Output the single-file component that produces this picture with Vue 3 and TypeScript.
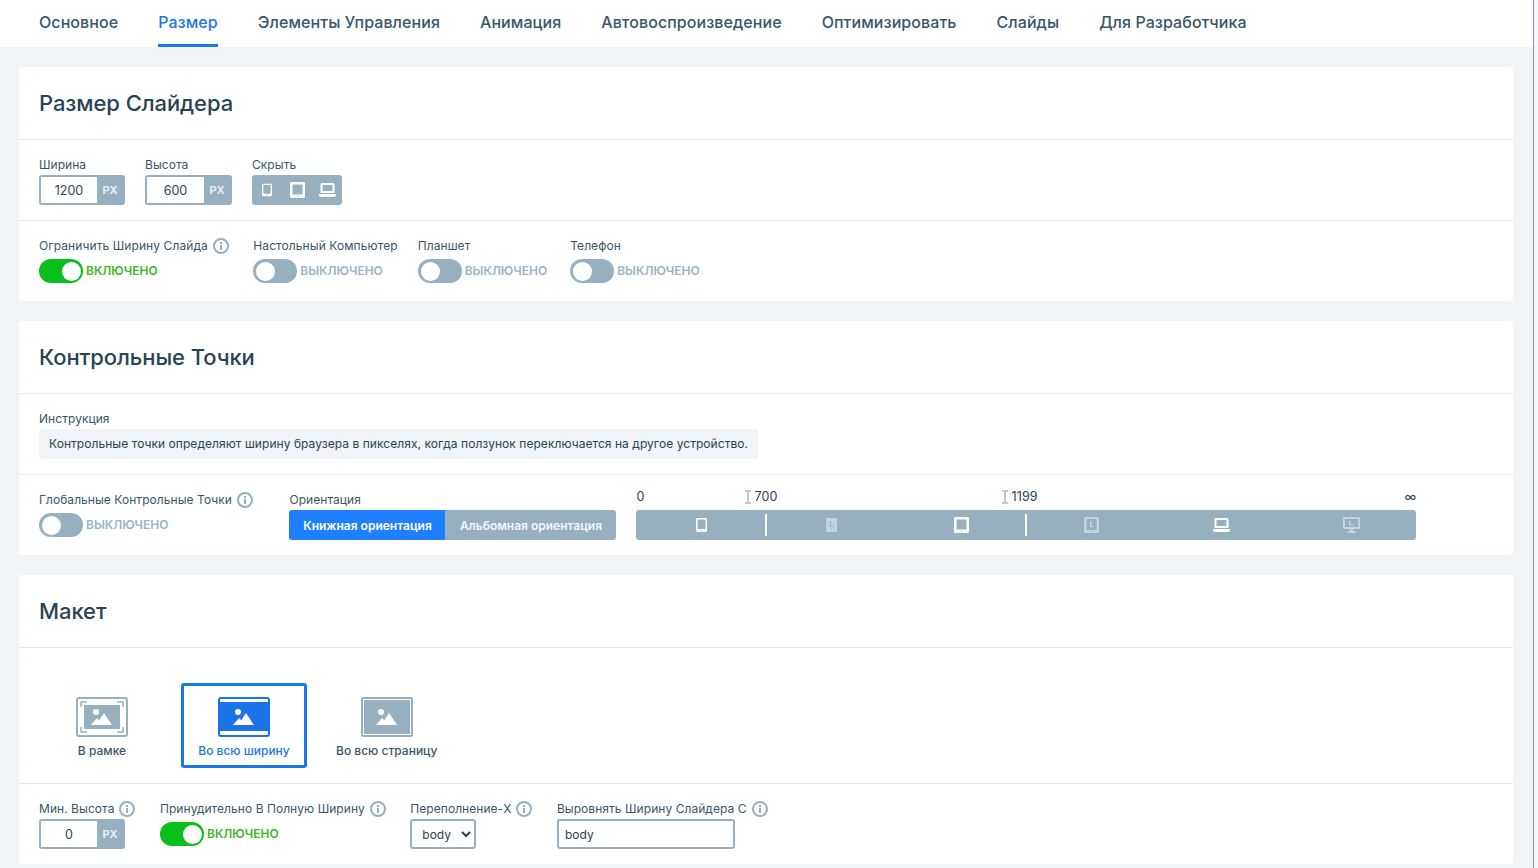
<script setup lang="ts">
import { ref } from 'vue'

const tabs = ['Основное', 'Размер', 'Элементы Управления', 'Анимация', 'Автовоспроизведение', 'Оптимизировать', 'Слайды', 'Для Разработчика']
const activeTab = ref('Размер')

const sizeToggles = [
  { label: 'Ограничить Ширину Слайда', on: true, info: true },
  { label: 'Настольный Компьютер', on: false, info: false },
  { label: 'Планшет', on: false, info: false },
  { label: 'Телефон', on: false, info: false },
]

// ширина и высота иконки совпадают с viewBox символа
const breakpoints = [
  { id: 'phone', w: 11, h: 14, dim: false },
  { id: 'phone-l', w: 11, h: 14, dim: true },
  { id: 'tablet', w: 15, h: 16, dim: false },
  { id: 'tablet-l', w: 15, h: 16, dim: true },
  { id: 'laptop', w: 17, h: 14, dim: false },
  { id: 'desktop-l', w: 17, h: 16, dim: true },
]

const layouts = [
  { id: 'boxed', label: 'В рамке' },
  { id: 'wide', label: 'Во всю ширину' },
  { id: 'page', label: 'Во всю страницу' },
]
const activeLayout = ref('wide')
</script>

<template>
  <div class="page">
    <svg class="defs" aria-hidden="true">
      <symbol id="phone" viewBox="0 0 11 14">
        <path fill-rule="evenodd" d="M1.500 0h8A1.500 1.500 0 0 1 11 1.500v11A1.500 1.500 0 0 1 9.500 14h-8A1.500 1.500 0 0 1 0 12.500v-11A1.500 1.500 0 0 1 1.500 0zM1.500 1.500v9.500h8V1.500zM5 12v1h1v-1z" />
      </symbol>
      <symbol id="phone-l" viewBox="0 0 11 14">
        <path fill-rule="evenodd" d="M1 0h9a1 1 0 0 1 1 1v12a1 1 0 0 1-1 1H1a1 1 0 0 1-1-1V1a1 1 0 0 1 1-1zM4 3v6h4V8H5V3zM5 11v1h1v-1z" />
      </symbol>
      <symbol id="tablet" viewBox="0 0 15 16">
        <path fill-rule="evenodd" d="M1.500 0h12A1.500 1.500 0 0 1 15 1.500v13a1.500 1.500 0 0 1-1.500 1.500h-12A1.500 1.500 0 0 1 0 14.500v-13A1.500 1.500 0 0 1 1.500 0zM2.500 2.500v10h10v-10zM7 13.500v1h1v-1z" />
      </symbol>
      <symbol id="tablet-l" viewBox="0 0 15 16">
        <path fill-rule="evenodd" d="M1.500 0h12A1.500 1.500 0 0 1 15 1.500v13a1.500 1.500 0 0 1-1.500 1.500h-12A1.500 1.500 0 0 1 0 14.500v-13A1.500 1.500 0 0 1 1.500 0zM2.500 2v11h10V2zM6 4v6h4V9H7.500V4zM7 14v1h1v-1z" />
      </symbol>
      <symbol id="laptop" viewBox="0 0 17 14">
        <path fill-rule="evenodd" d="M3 0h11a1.500 1.500 0 0 1 1.500 1.500V10H1.500V1.500A1.500 1.500 0 0 1 3 0zM3.500 2v6h10V2zM0 11h17v1a2 2 0 0 1-2 2H2a2 2 0 0 1-2-2z" />
      </symbol>
      <symbol id="desktop-l" viewBox="0 0 17 16">
        <path fill-rule="evenodd" d="M1 0h15a1 1 0 0 1 1 1v10a1 1 0 0 1-1 1H1a1 1 0 0 1-1-1V1a1 1 0 0 1 1-1zM2 2v8h13V2zM6 3.500v5h4.500V7.500H7.500v-4zM7 12h3v2h2.500v2h-8v-2H7z" />
      </symbol>
      <symbol id="info" viewBox="0 0 16 16">
        <circle cx="8" cy="8" r="7" fill="none" stroke="currentColor" stroke-width="2" />
        <rect x="7" y="7" width="2" height="5" fill="currentColor" />
        <rect x="7" y="4" width="2" height="2" fill="currentColor" />
      </symbol>
      <symbol id="peaks" viewBox="0 0 52 40">
        <circle cx="20" cy="15" r="3" />
        <path d="M15 28l6-7 2.300 2.300L28 16l8 12z" />
      </symbol>
    </svg>

    <nav class="tabs">
      <a v-for="tab in tabs" :key="tab" class="tab" :class="{ active: tab === activeTab }" @click="activeTab = tab">{{ tab }}</a>
    </nav>

    <main class="content">
      <section class="card">
        <h2 class="card-title">Размер Слайдера</h2>
        <div class="row">
          <div class="field">
            <label class="lbl">Ширина</label>
            <div class="num w86"><input class="num-input" value="1200" /><span class="unit">PX</span></div>
          </div>
          <div class="field">
            <label class="lbl">Высота</label>
            <div class="num w87"><input class="num-input" value="600" /><span class="unit">PX</span></div>
          </div>
          <div class="field">
            <label class="lbl">Скрыть</label>
            <div class="hide-group">
              <svg class="ic first" width="10" height="14"><use href="#phone" /></svg>
              <svg class="ic" width="15" height="16"><use href="#tablet" /></svg>
              <svg class="ic" width="17" height="14"><use href="#laptop" /></svg>
            </div>
          </div>
        </div>
        <div class="row loose">
          <div v-for="t in sizeToggles" :key="t.label" class="field">
            <label class="lbl">{{ t.label }}<svg v-if="t.info" class="info" width="16" height="16"><use href="#info" /></svg></label>
            <div class="toggle-wrap">
              <span class="toggle" :class="{ on: t.on }"><i class="knob"></i></span>
              <span class="toggle-text" :class="{ on: t.on }">{{ t.on ? 'ВКЛЮЧЕНО' : 'ВЫКЛЮЧЕНО' }}</span>
            </div>
          </div>
        </div>
      </section>

      <section class="card">
        <h2 class="card-title">Контрольные Точки</h2>
        <div class="row">
          <div class="field">
            <label class="lbl">Инструкция</label>
            <div class="note">Контрольные точки определяют ширину браузера в пикселях, когда ползунок переключается на другое устройство.</div>
          </div>
        </div>
        <div class="row">
          <div class="field global">
            <label class="lbl">Глобальные Контрольные Точки<svg class="info" width="16" height="16"><use href="#info" /></svg></label>
            <div class="toggle-wrap">
              <span class="toggle"><i class="knob"></i></span>
              <span class="toggle-text">ВЫКЛЮЧЕНО</span>
            </div>
          </div>
          <div class="field">
            <label class="lbl">Ориентация</label>
            <div class="orient">
              <button class="orient-btn active">Книжная ориентация</button>
              <button class="orient-btn">Альбомная ориентация</button>
            </div>
          </div>
          <div class="bp">
            <div class="bp-labels">
              <span>0</span>
              <span class="bp-mark"><i class="cursor"></i>700</span>
              <span class="bp-mark"><i class="cursor"></i>1199</span>
              <span class="bp-inf">∞</span>
            </div>
            <div class="bp-bar">
              <span v-for="(b, i) in breakpoints" :key="b.id" class="bp-cell" :class="{ split: i === 1 || i === 3 }">
                <svg class="ic" :class="{ dim: b.dim }" :width="b.w" :height="b.h"><use :href="'#' + b.id" /></svg>
              </span>
            </div>
          </div>
        </div>
      </section>

      <section class="card">
        <h2 class="card-title">Макет</h2>
        <div class="layouts">
          <button v-for="l in layouts" :key="l.id" class="layout" :class="{ active: l.id === activeLayout }" @click="activeLayout = l.id">
            <svg v-if="l.id === 'boxed'" class="thumb" width="52" height="40" viewBox="0 0 52 40">
              <rect x="1" y="1" width="50" height="38" rx="2" fill="#fff" stroke="#96b0c0" stroke-width="2" />
              <path d="M5 10V5h6M41 5h6v5M47 30v5h-6M11 35H5v-5" fill="none" stroke="#96b0c0" stroke-width="1.500" />
              <rect x="8" y="8" width="36" height="24" fill="#96b0c0" />
              <use href="#peaks" width="52" height="40" fill="#fff" />
            </svg>
            <svg v-else-if="l.id === 'wide'" class="thumb" width="52" height="40" viewBox="0 0 52 40">
              <rect x="1" y="1" width="50" height="38" rx="2" fill="#fff" stroke="#1a73e8" stroke-width="2" />
              <rect x="2" y="5" width="48" height="29" fill="#1a73e8" />
              <use href="#peaks" width="52" height="40" fill="#fff" />
            </svg>
            <svg v-else class="thumb" width="52" height="40" viewBox="0 0 52 40">
              <rect width="52" height="40" rx="2" fill="#96b0c0" />
              <rect x="2.500" y="2.500" width="47" height="35" fill="none" stroke="#fff" stroke-width="1" />
              <use href="#peaks" width="52" height="40" fill="#fff" />
            </svg>
            <span class="layout-name">{{ l.label }}</span>
          </button>
        </div>
        <div class="row">
          <div class="field">
            <label class="lbl">Мин. Высота<svg class="info" width="16" height="16"><use href="#info" /></svg></label>
            <div class="num w86"><input class="num-input" value="0" /><span class="unit">PX</span></div>
          </div>
          <div class="field">
            <label class="lbl">Принудительно В Полную Ширину<svg class="info" width="16" height="16"><use href="#info" /></svg></label>
            <div class="toggle-wrap">
              <span class="toggle on"><i class="knob"></i></span>
              <span class="toggle-text on">ВКЛЮЧЕНО</span>
            </div>
          </div>
          <div class="field">
            <label class="lbl">Переполнение-X<svg class="info" width="16" height="16"><use href="#info" /></svg></label>
            <select class="sel"><option>body</option></select>
          </div>
          <div class="field">
            <label class="lbl">Выровнять Ширину Слайдера С<svg class="info" width="16" height="16"><use href="#info" /></svg></label>
            <input class="txt" value="body" />
          </div>
        </div>
      </section>
    </main>
  </div>
</template>

<style>
html,
body {
  margin: 0;
  height: 868px;
  overflow: hidden;
  background: #f3f5f9;
}
</style>

<style scoped>
.page {
  width: 1533px;
  height: 868px;
  overflow: hidden;
  border-right: 1px solid #7f9bad;
  background: #f0f4f7;
  font-family: Inter, "Noto Sans", sans-serif;
  color: #2c4253;
  position: relative;
}
.defs {
  position: absolute;
  width: 0;
  height: 0;
}
.tabs {
  display: flex;
  gap: 40px;
  height: 47px;
  padding-left: 39px;
  background: #fff;
}
.tab {
  display: block;
  box-sizing: border-box;
  height: 47px;
  line-height: 44px;
  font-size: 16px;
  font-weight: 500;
  letter-spacing: 0.07px;
  color: #3a5568;
  cursor: pointer;
}
.tab.active {
  color: #1a76ec;
  border-bottom: 3px solid #1a76ec;
}
.content {
  display: flex;
  flex-direction: column;
  gap: 20px;
  padding: 20px 20px 0 19px;
}
.card {
  background: #fff;
  border-radius: 3px;
}
.card-title {
  margin: 0;
  padding: 0 20px;
  height: 72px;
  line-height: 73px;
  font-size: 22px;
  font-weight: 450;
  letter-spacing: -0.08px;
  color: #2c4253;
}
.row {
  display: flex;
  gap: 20px;
  padding: 14px 20px 15px;
  border-top: 1px solid #e5eaee;
  height: 51px;
}
.field {
  display: flex;
  flex-direction: column;
}
.global {
  margin-right: 12px;
}
.lbl {
  display: flex;
  align-items: center;
  height: 21px;
  font-size: 12px;
  letter-spacing: 0.05px;
  color: #3a5568;
  white-space: nowrap;
}
.loose .lbl {
  letter-spacing: 0.08px;
}
.info {
  margin: 0 4.500px 0 5px;
  color: #96b0c0;
}
.num {
  display: flex;
  box-sizing: border-box;
  height: 30px;
  border: 2px solid #96b0c0;
  border-radius: 3px;
  background: #96b0c0;
}
.w86 {
  width: 86px;
}
.w87 {
  width: 87px;
}
.num-input {
  width: 0;
  flex: 1;
  border: 0;
  padding: 1px 0 0;
  outline: 0;
  background: #fff;
  text-align: center;
  font: 12.500px Inter, sans-serif;
  color: #2c4253;
}
.unit {
  width: 26px;
  line-height: 26px;
  text-align: center;
  font-size: 11px;
  font-weight: 700;
  color: #e8eef2;
}
.hide-group {
  display: flex;
  align-items: center;
  gap: 14px;
  box-sizing: border-box;
  width: 90px;
  height: 30px;
  padding-left: 10px;
  border-radius: 3px;
  background: #96b0c0;
}
.ic {
  display: block;
  fill: #fff;
}
.ic.first {
  margin-right: 4px;
}
.ic.dim {
  opacity: 0.45;
}
.toggle-wrap {
  display: flex;
  align-items: center;
  height: 24px;
  margin-top: 3px;
  padding-right: 3px;
}
.toggle {
  display: flex;
  align-items: center;
  box-sizing: border-box;
  width: 44px;
  height: 24px;
  padding: 0 3px;
  border-radius: 12px;
  background: #96b0c0;
}
.toggle.on {
  justify-content: flex-end;
  padding-right: 2px;
  background: #08bf1c;
}
.knob {
  display: block;
  width: 19px;
  height: 19px;
  border-radius: 50%;
  background: #fff;
}
.toggle-text {
  margin: 0 0 1px 3px;
  font-size: 12px;
  font-weight: 600;
  color: #9ab3c3;
}
.toggle-text.on {
  color: #3cb91c;
}
.note {
  box-sizing: border-box;
  height: 30px;
  line-height: 30px;
  padding: 0 10px;
  border-radius: 2px;
  background: #f0f4f7;
  font-size: 12px;
  letter-spacing: 0.05px;
  color: #2c4253;
}
.orient {
  display: flex;
  height: 30px;
}
.orient-btn {
  width: 171px;
  border: 0;
  padding: 0;
  background: #96b0c0;
  color: #f4f7f9;
  font: 600 12px Inter, sans-serif;
  border-radius: 0 3px 3px 0;
}
.orient-btn.active {
  width: 156px;
  background: #1f80ff;
  color: #fff;
  border-radius: 3px 0 0 3px;
}
.bp {
  width: 780px;
  margin-top: -8px;
}
.bp-labels {
  display: grid;
  grid-template-columns: 109px 257px 1fr auto;
  align-items: center;
  box-sizing: border-box;
  height: 28px;
  padding-top: 3px;
  font-size: 12.500px;
  letter-spacing: 0.15px;
}
.bp-mark {
  display: flex;
  align-items: center;
  color: #2c4253;
}
.cursor {
  display: block;
  box-sizing: border-box;
  width: 6px;
  height: 14px;
  margin-right: 3px;
  border-top: 2px solid #b8cbd6;
  border-bottom: 2px solid #b8cbd6;
  background: linear-gradient(#b8cbd6, #b8cbd6) center / 2px 100% no-repeat;
}
.bp-bar {
  display: grid;
  grid-template-columns: repeat(6, 1fr);
  height: 30px;
  margin-top: 1px;
  border-radius: 3px;
  background: #96b0c0;
}
.bp-cell {
  display: flex;
  align-items: center;
  justify-content: center;
  position: relative;
}
.split::before {
  content: "";
  position: absolute;
  left: -1px;
  top: 4px;
  bottom: 4px;
  width: 2px;
  background: #fff;
}
.layouts {
  display: flex;
  gap: 16px;
  height: 85px;
  padding: 35px 20px 15px;
  border-top: 1px solid #e5eaee;
}
.layout {
  display: flex;
  flex-direction: column;
  align-items: center;
  box-sizing: border-box;
  min-width: 126px;
  height: 85px;
  padding: 11px 10px 0;
  border: 3px solid transparent;
  border-radius: 3px;
  background: none;
  font-family: inherit;
  cursor: pointer;
}
.layout.active {
  border-color: #1a76ec;
}
.layout-name {
  margin-top: 6px;
  font-size: 12px;
  font-weight: 500;
  color: #3a5568;
  white-space: nowrap;
}
.layout.active .layout-name {
  color: #1a76ec;
}
.sel {
  box-sizing: border-box;
  width: 66px;
  height: 30px;
  padding: 1px 4px 0 6px;
  border: 2px solid #96b0c0;
  border-radius: 3px;
  outline: 0;
  background: #fff;
  font: 12px Inter, sans-serif;
  color: #2c4253;
}
.txt {
  box-sizing: border-box;
  width: 178px;
  height: 30px;
  padding: 1px 6px 0;
  border: 2px solid #96b0c0;
  border-radius: 3px;
  outline: 0;
  font: 12px Inter, sans-serif;
  color: #2c4253;
}
</style>
